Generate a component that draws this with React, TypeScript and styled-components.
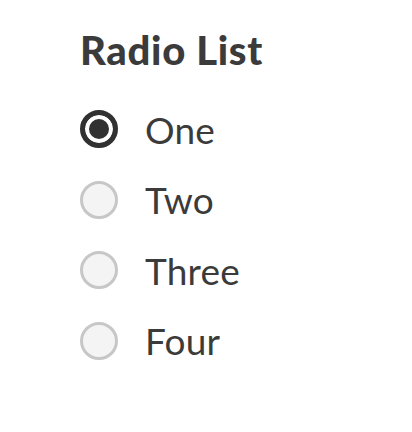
import React from 'react';
import styled, { createGlobalStyle } from 'styled-components';

const GlobalStyle = createGlobalStyle`
  html, body {
    margin: 0;
    padding: 0;
    background: #ffffff;
  }
  body {
    font-family: Lato, 'Noto Sans', sans-serif;
    color: #3b3b3b;
  }
`;

const RadioGroup = styled.fieldset`
  margin: 0;
  padding: 28px 0 0 80px;
  border: 0;
  display: flex;
  flex-direction: column;
`;

const Legend = styled.legend`
  float: left;
  padding: 0;
  margin: 0 0 22px 0;
  font-size: 40px;
  font-weight: 900;
  letter-spacing: 0.7px;
  line-height: 44px;
  color: #3b3b3b;
`;

const Option = styled.label`
  clear: both;
  display: flex;
  align-items: center;
  gap: 27px;
  height: 70.5px;
  cursor: pointer;
`;

const Radio = styled.input.attrs({ type: 'radio' })`
  appearance: none;
  margin: 0;
  width: 38px;
  height: 38px;
  box-sizing: border-box;
  border-radius: 50%;
  border: 3px solid #c7c7c7;
  background: #f4f4f4;
  flex: none;

  &:checked {
    border: 5px solid #313131;
    background: #313131;
    box-shadow: inset 0 0 0 4px #ffffff;
  }
`;

const OptionText = styled.span`
  font-size: 37px;
  font-weight: 400;
  color: #3b3b3b;
  letter-spacing: 0.2px;
`;

const options = ['One', 'Two', 'Three', 'Four'];

export default function App() {
  const [value, setValue] = React.useState('One');
  return (
    <>
      <GlobalStyle />
      <RadioGroup>
        <Legend>Radio List</Legend>
        {options.map((opt) => (
          <Option key={opt}>
            <Radio
              name="radio-list"
              value={opt}
              checked={value === opt}
              onChange={() => setValue(opt)}
            />
            <OptionText>{opt}</OptionText>
          </Option>
        ))}
      </RadioGroup>
    </>
  );
}
